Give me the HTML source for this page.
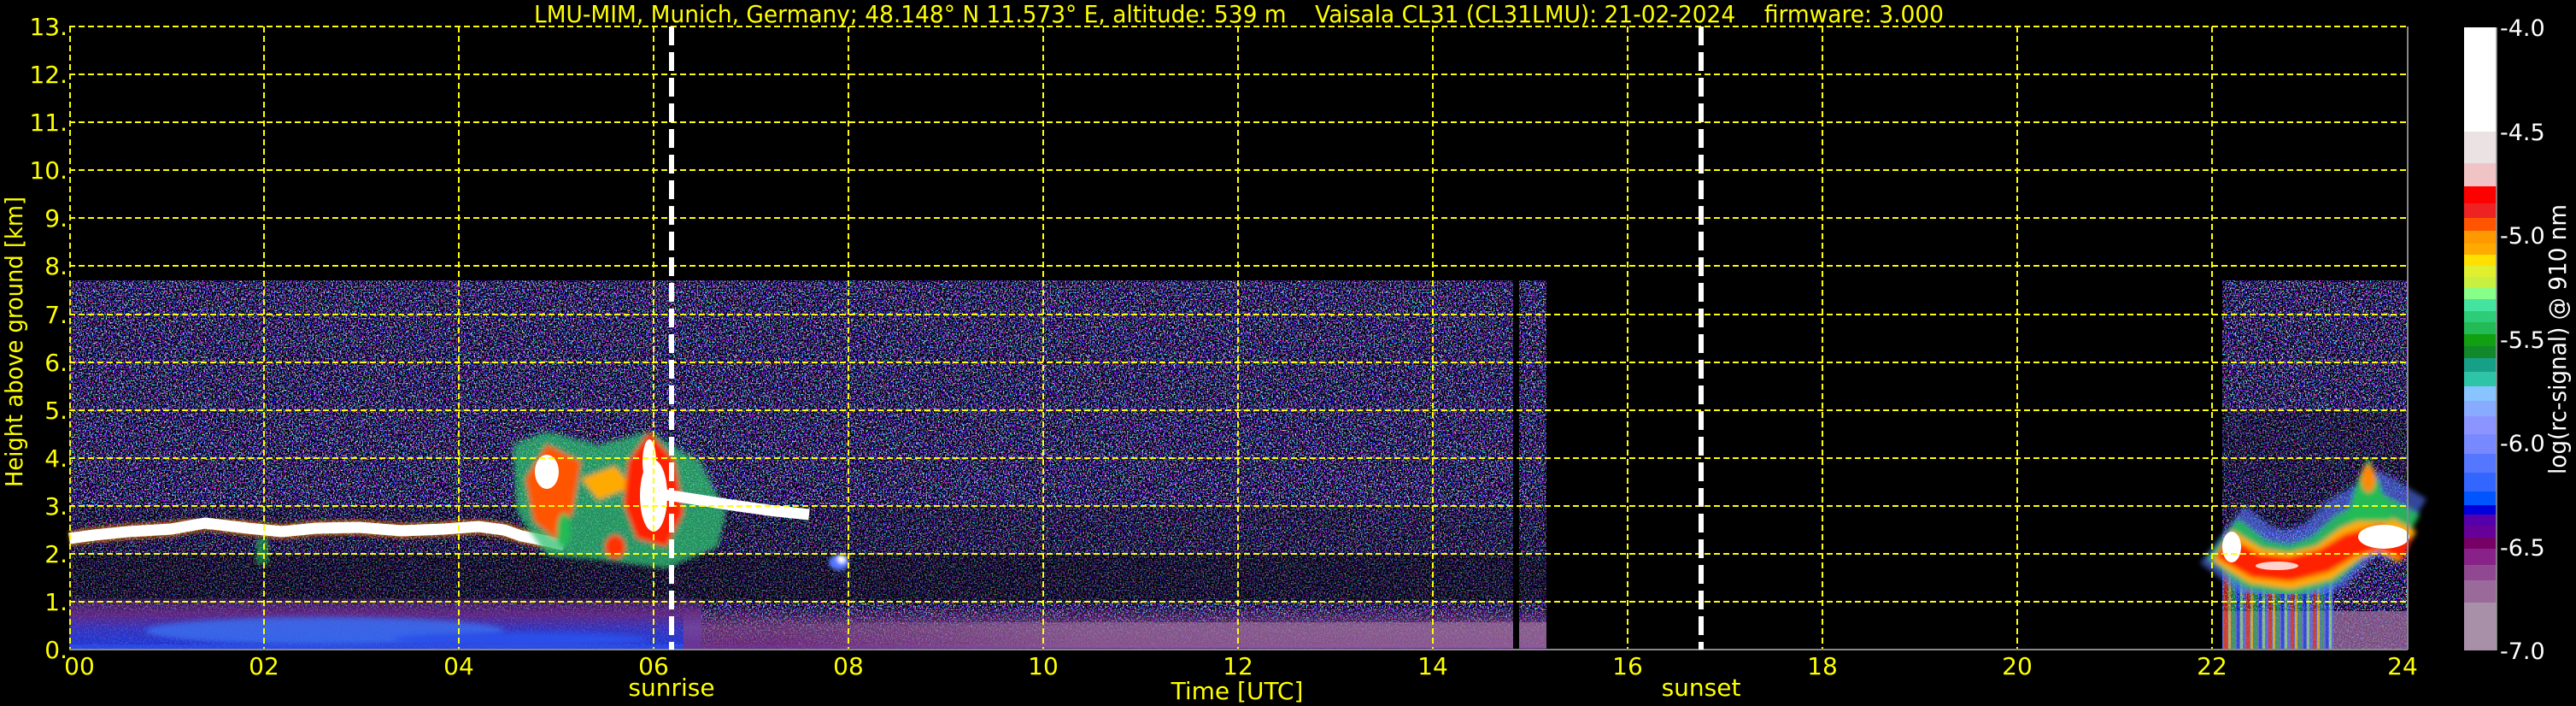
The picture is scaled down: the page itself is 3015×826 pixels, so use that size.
<!DOCTYPE html>
<html><head><meta charset="utf-8"><style>
html,body{margin:0;padding:0;background:#000;width:3015px;height:826px;overflow:hidden}
svg{display:block}
text{font-family:"DejaVu Sans","Liberation Sans",sans-serif;fill:#ffff00}
</style></head><body>
<svg width="3015" height="826" viewBox="0 0 3015 826" xmlns="http://www.w3.org/2000/svg">
<defs>
<filter id="nz" x="0" y="0" width="100%" height="100%" color-interpolation-filters="sRGB">
<feTurbulence type="fractalNoise" baseFrequency="0.62" numOctaves="1" seed="7"/>
<feComponentTransfer>
<feFuncR type="linear" slope="3" intercept="-1.1"/>
<feFuncG type="linear" slope="3" intercept="-1.15"/>
<feFuncB type="linear" slope="2.6" intercept="-0.45"/>
<feFuncA type="discrete" tableValues="0 0 0 1 1 1"/>
</feComponentTransfer>
</filter>
<filter id="nz2" x="0" y="0" width="100%" height="100%" color-interpolation-filters="sRGB">
<feTurbulence type="fractalNoise" baseFrequency="0.7" numOctaves="1" seed="3"/>
<feComponentTransfer>
<feFuncR type="linear" slope="0" intercept="0"/>
<feFuncG type="linear" slope="0" intercept="0"/>
<feFuncB type="linear" slope="0" intercept="0"/>
<feFuncA type="discrete" tableValues="0 0 0 1 1"/>
</feComponentTransfer>
</filter>
<filter id="bl" x="-20%" y="-20%" width="140%" height="140%"><feGaussianBlur stdDeviation="3"/></filter>
<filter id="bl2" x="-20%" y="-20%" width="140%" height="140%"><feGaussianBlur stdDeviation="2"/></filter>
<linearGradient id="bandL" x1="0" y1="0" x2="0" y2="1">
<stop offset="0" stop-color="#5a2a78" stop-opacity="0.4"/>
<stop offset="0.3" stop-color="#6a2a8a"/>
<stop offset="0.6" stop-color="#3a3ad0"/>
<stop offset="1" stop-color="#1a40ee"/>
</linearGradient>
<linearGradient id="bandM" x1="0" y1="0" x2="0" y2="1">
<stop offset="0" stop-color="#7a3a80" stop-opacity="0.2"/>
<stop offset="0.45" stop-color="#8a4a8a" stop-opacity="0.8"/>
<stop offset="1" stop-color="#7a2a80"/>
</linearGradient>
<linearGradient id="bandH" x1="0" y1="0" x2="1" y2="0">
<stop offset="0" stop-color="#a078a0" stop-opacity="0"/>
<stop offset="0.4" stop-color="#a078a0" stop-opacity="0.5"/>
<stop offset="1" stop-color="#a078a0" stop-opacity="0.6"/>
</linearGradient>
<pattern id="strk" width="26" height="80" patternUnits="userSpaceOnUse">
<rect width="26" height="80" fill="#5577ff"/>
<rect x="3" width="4" height="80" fill="#ff3300"/>
<rect x="8" width="3" height="80" fill="#ffdd00"/>
<rect x="12" width="4" height="80" fill="#22bb55"/>
<rect x="18" width="3" height="80" fill="#0044ff"/>
<rect x="22" width="3" height="80" fill="#88ff88"/>
</pattern>
</defs>

<rect x="81" y="328" width="1729" height="432" fill="#000" filter="url(#nz)"/>
<rect x="2601" y="328" width="217" height="432" fill="#000" filter="url(#nz)"/>
<rect x="81" y="648" width="1729" height="56" fill="#000" opacity="0.45"/>
<rect x="81" y="592" width="1729" height="56" fill="#000" opacity="0.2"/>
<rect x="2601" y="480" width="217" height="140" fill="#000" opacity="0.25"/>

<rect x="81" y="700" width="740" height="60" fill="url(#bandL)" opacity="0.85"/>
<ellipse cx="380" cy="738" rx="210" ry="16" fill="#3a70f0" filter="url(#bl)" opacity="0.8"/>
<ellipse cx="610" cy="748" rx="150" ry="8" fill="#2a50e8" filter="url(#bl)"/>
<rect x="81" y="754" width="1729" height="5" fill="#3355ee" opacity="0.5"/>
<rect x="800" y="712" width="1010" height="48" fill="url(#bandM)" opacity="0.8"/>
<rect x="900" y="728" width="910" height="30" fill="url(#bandH)"/>
<rect x="2601" y="715" width="217" height="45" fill="#9a6a9a" opacity="0.75"/>

<rect x="1771" y="328" width="7" height="432" fill="#000"/>

<polyline points="81,630 110,626 150,622 200,619 240,612 290,618 330,622 370,618 420,617 470,621 520,619 560,616 590,620 610,627 640,633 660,638" fill="none" stroke="#ff8800" stroke-width="18" filter="url(#bl2)" opacity="0.6"/>
<polyline points="81,630 110,626 150,622 200,619 240,612 290,618 330,622 370,618 420,617 470,621 520,619 560,616 590,620 610,627 640,633 660,638" fill="none" stroke="#fff" stroke-width="13"/>
<rect x="300" y="630" width="14" height="30" fill="#22bb55" opacity="0.6" filter="url(#bl2)"/>

<g filter="url(#bl)">
<path d="M600 520 L640 505 L700 520 L760 505 L820 540 L850 600 L840 640 L780 665 L700 655 L640 650 L605 600 Z" fill="#2cc070" opacity="0.75"/>
<path d="M615 560 L640 520 L680 540 L670 600 L650 630 L625 610 Z" fill="#ff5500"/>
<path d="M680 560 L720 545 L740 570 L700 585 Z" fill="#ffaa00"/>
<path d="M735 540 L760 505 L790 540 L800 600 L780 640 L745 630 L730 590 Z" fill="#ff2200"/>
<ellipse cx="720" cy="640" rx="12" ry="14" fill="#ff3300"/>
<ellipse cx="660" cy="620" rx="8" ry="20" fill="#22bb55"/>
</g>
<ellipse cx="640" cy="552" rx="14" ry="20" fill="#fff"/>
<ellipse cx="765" cy="580" rx="16" ry="42" fill="#fff"/>
<ellipse cx="760" cy="540" rx="8" ry="26" fill="#fff"/>
<polyline points="765,577 800,582 850,590 900,597 947,602" fill="none" stroke="#fff" stroke-width="13"/>
<g filter="url(#bl2)"><ellipse cx="982" cy="658" rx="12" ry="9" fill="#5577ff"/><ellipse cx="985" cy="654" rx="5" ry="5" fill="#fff"/></g>

<rect x="2601" y="660" width="130" height="100" fill="url(#strk)" opacity="0.6"/>
<g filter="url(#bl)">
<polyline points="2601,625 2640,655 2680,665 2720,650 2750,620 2785,600 2818,620" fill="none" stroke="#5577ff" stroke-width="85" opacity="0.6"/>
<polyline points="2601,630 2640,660 2680,668 2720,655 2750,628 2785,610 2818,628" fill="none" stroke="#22bb55" stroke-width="60" opacity="0.9"/>
<polyline points="2601,638 2640,662 2680,668 2720,658 2750,636 2785,622 2818,640" fill="none" stroke="#ffaa00" stroke-width="42"/>
<polyline points="2601,640 2640,662 2680,666 2720,656 2750,638 2785,628 2818,642" fill="none" stroke="#ff2200" stroke-width="28"/>
<path d="M2745 610 L2760 560 L2772 535 L2785 565 L2800 610 Z" fill="#22bb55"/>
<ellipse cx="2772" cy="560" rx="8" ry="16" fill="#ff8800"/>
</g>
<ellipse cx="2790" cy="628" rx="30" ry="14" fill="#fff"/>
<ellipse cx="2612" cy="640" rx="11" ry="18" fill="#fff"/>
<ellipse cx="2665" cy="662" rx="25" ry="5" fill="#fff" opacity="0.8"/>

<g stroke="#ffff00" stroke-width="2" stroke-dasharray="7 4" fill="none">
<path d="M81 31H2818M81 87H2818M81 143H2818M81 199H2818M81 255H2818M81 311H2818M81 368H2818M81 424H2818M81 480H2818M81 536H2818M81 592H2818M81 648H2818M81 704H2818"/>
<path d="M309 31V760M537 31V760M765 31V760M993 31V760M1221 31V760M1449 31V760M1677 31V760M1905 31V760M2133 31V760M2361 31V760M2589 31V760"/>
<path d="M82 31V760"/>
</g>
<path d="M2818 31V760M81 760H2818" stroke="#888" stroke-width="2"/>

<g stroke="#fff" stroke-width="6" stroke-dasharray="22 8">
<path d="M786 31V760"/><path d="M1991 31V760"/>
</g>

<text x="1450" y="26" font-size="28" text-anchor="middle" textLength="1650" lengthAdjust="spacingAndGlyphs" xml:space="preserve">LMU-MIM, Munich, Germany; 48.148° N 11.573° E, altitude: 539 m    Vaisala CL31 (CL31LMU): 21-02-2024    firmware: 3.000</text>

<g font-size="28" text-anchor="end">
<text x="79" y="770">0.</text><text x="79" y="714">1.</text><text x="79" y="658">2.</text><text x="79" y="602">3.</text><text x="79" y="546">4.</text><text x="79" y="490">5.</text><text x="79" y="434">6.</text><text x="79" y="378">7.</text><text x="79" y="321">8.</text><text x="79" y="265">9.</text><text x="79" y="209">10.</text><text x="79" y="153">11.</text><text x="79" y="97">12.</text><text x="79" y="41">13.</text>
</g>
<text transform="translate(26,400) rotate(-90)" font-size="28" text-anchor="middle" textLength="340" lengthAdjust="spacingAndGlyphs">Height above ground [km]</text>

<g font-size="28" text-anchor="middle">
<text x="93" y="789">00</text><text x="309" y="789">02</text><text x="537" y="789">04</text><text x="765" y="789">06</text><text x="993" y="789">08</text><text x="1221" y="789">10</text><text x="1449" y="789">12</text><text x="1677" y="789">14</text><text x="1905" y="789">16</text><text x="2133" y="789">18</text><text x="2361" y="789">20</text><text x="2589" y="789">22</text><text x="2812" y="789">24</text>
<text x="786" y="814">sunrise</text><text x="1991" y="814">sunset</text>
<text x="1448" y="818">Time [UTC]</text>
</g>

<g>
<rect x="2884" y="32" width="38" height="122" fill="#ffffff"/>
<rect x="2884" y="154" width="38" height="37" fill="#ebe3e3"/>
<rect x="2884" y="191" width="38" height="27" fill="#f0c4c4"/>
<rect x="2884" y="218" width="38" height="20" fill="#ff0000"/>
<rect x="2884" y="238" width="38" height="17" fill="#ee2222"/>
<rect x="2884" y="255" width="38" height="15" fill="#ff5500"/>
<rect x="2884" y="270" width="38" height="15" fill="#ff9900"/>
<rect x="2884" y="285" width="38" height="13" fill="#ffaa00"/>
<rect x="2884" y="298" width="38" height="13" fill="#ffe000"/>
<rect x="2884" y="311" width="38" height="13" fill="#e0f030"/>
<rect x="2884" y="324" width="38" height="13" fill="#c8f040"/>
<rect x="2884" y="337" width="38" height="13" fill="#88ff88"/>
<rect x="2884" y="350" width="38" height="14" fill="#44e4a0"/>
<rect x="2884" y="364" width="38" height="13" fill="#2ccc78"/>
<rect x="2884" y="377" width="38" height="14" fill="#22bb55"/>
<rect x="2884" y="391" width="38" height="14" fill="#11a011"/>
<rect x="2884" y="405" width="38" height="14" fill="#11882a"/>
<rect x="2884" y="419" width="38" height="16" fill="#17a088"/>
<rect x="2884" y="435" width="38" height="17" fill="#2ec4a8"/>
<rect x="2884" y="452" width="38" height="17" fill="#88c4ff"/>
<rect x="2884" y="469" width="38" height="18" fill="#88aaff"/>
<rect x="2884" y="487" width="38" height="21" fill="#8c94ff"/>
<rect x="2884" y="508" width="38" height="23" fill="#7888ff"/>
<rect x="2884" y="531" width="38" height="22" fill="#5577ff"/>
<rect x="2884" y="553" width="38" height="22" fill="#3366ff"/>
<rect x="2884" y="575" width="38" height="16" fill="#0055ff"/>
<rect x="2884" y="591" width="38" height="11" fill="#0000dd"/>
<rect x="2884" y="602" width="38" height="13" fill="#5500aa"/>
<rect x="2884" y="615" width="38" height="14" fill="#660099"/>
<rect x="2884" y="629" width="38" height="13" fill="#770066"/>
<rect x="2884" y="642" width="38" height="19" fill="#882288"/>
<rect x="2884" y="661" width="38" height="18" fill="#904890"/>
<rect x="2884" y="679" width="38" height="26" fill="#9a6a9a"/>
<rect x="2884" y="705" width="38" height="56" fill="#a890a8"/>
<path d="M2922 32V761" stroke="#999" stroke-width="1.5"/>
</g>
<g font-size="27">
<text x="2926" y="42" style="fill:#fff">-4.0</text>
<text x="2926" y="164" style="fill:#fff">-4.5</text>
<text x="2926" y="285" style="fill:#fff">-5.0</text>
<text x="2926" y="407" style="fill:#fff">-5.5</text>
<text x="2926" y="528" style="fill:#fff">-6.0</text>
<text x="2926" y="650" style="fill:#fff">-6.5</text>
<text x="2926" y="771" style="fill:#fff">-7.0</text>
</g>
<text transform="translate(3003,397) rotate(-90)" font-size="28" text-anchor="middle" textLength="316" lengthAdjust="spacingAndGlyphs" style="fill:#fff">log(rc-signal) @ 910 nm</text>
</svg>
</body></html>
